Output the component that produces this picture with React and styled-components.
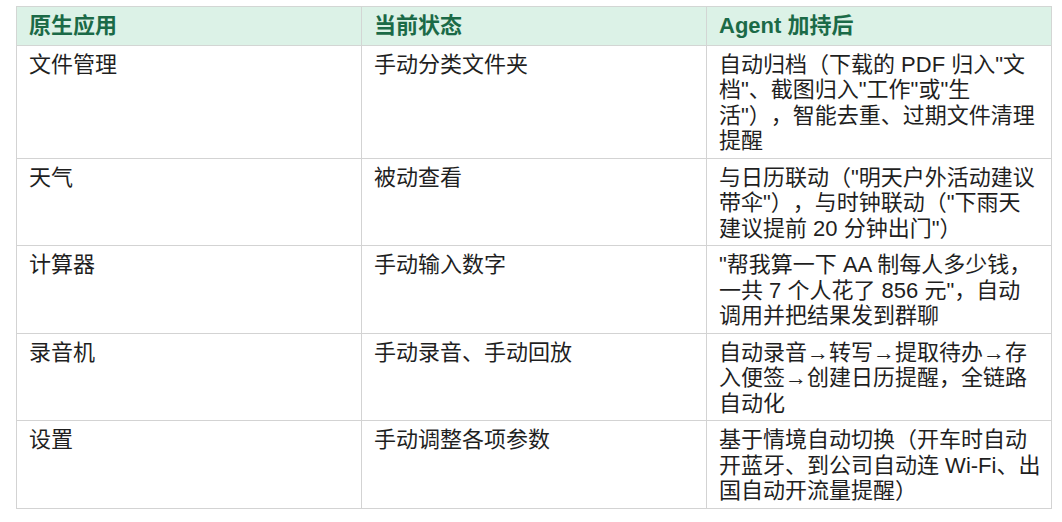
import React from "react";
import styled, { createGlobalStyle } from "styled-components";

const Global = createGlobalStyle`
  html, body { margin: 0; padding: 0; background: #ffffff; }
  body { font-family: "Liberation Sans", "Noto Sans CJK SC", sans-serif; }
`;

const Page = styled.div`
  padding: 6px 10px 0 16px;
`;

const Table = styled.table`
  width: 1036px;
  table-layout: fixed;
  border-collapse: collapse;
  font-family: "Liberation Sans", "Noto Sans CJK SC", sans-serif;
  font-size: 22px;
  line-height: 25.5px;
  color: #1f1f1f;
  text-spacing-trim: space-all;
`;

const Th = styled.th`
  background: #dcf2e7;
  color: #1b6a47;
  font-weight: 700;
  text-align: left;
  padding: 6px 8px 6px 12px;
  border: 1px solid #d3d6d4;
`;

const Td = styled.td`
  vertical-align: top;
  padding: 6px 8px 4px 12px;
  border: 1px solid #d3d3d3;
`;

const Line = styled.span`
  display: block;
  white-space: nowrap;
`;

const rows = [
  ["文件管理", "手动分类文件夹", ["自动归档（下载的 PDF 归入\"文", "档\"、截图归入\"工作\"或\"生", "活\"），智能去重、过期文件清理", "提醒"]],
  ["天气", "被动查看", ["与日历联动（\"明天户外活动建议", "带伞\"），与时钟联动（\"下雨天", "建议提前 20 分钟出门\"）"]],
  ["计算器", "手动输入数字", ["\"帮我算一下 AA 制每人多少钱，", "一共 7 个人花了 856 元\"，自动", "调用并把结果发到群聊"]],
  ["录音机", "手动录音、手动回放", ["自动录音→转写→提取待办→存", "入便签→创建日历提醒，全链路", "自动化"]],
  ["设置", "手动调整各项参数", ["基于情境自动切换（开车时自动", "开蓝牙、到公司自动连 Wi-Fi、出", "国自动开流量提醒）"]],
];

export default function App() {
  return (
    <Page>
      <Global />
      <Table>
        <thead>
          <tr>
            <Th>原生应用</Th>
            <Th>当前状态</Th>
            <Th>Agent 加持后</Th>
          </tr>
        </thead>
        <tbody>
          {rows.map((r, i) => (
            <tr key={i}>
              <Td>{r[0]}</Td>
              <Td>{r[1]}</Td>
              <Td>
                {r[2].map((line, j) => (
                  <Line key={j}>{line}</Line>
                ))}
              </Td>
            </tr>
          ))}
        </tbody>
      </Table>
    </Page>
  );
}
